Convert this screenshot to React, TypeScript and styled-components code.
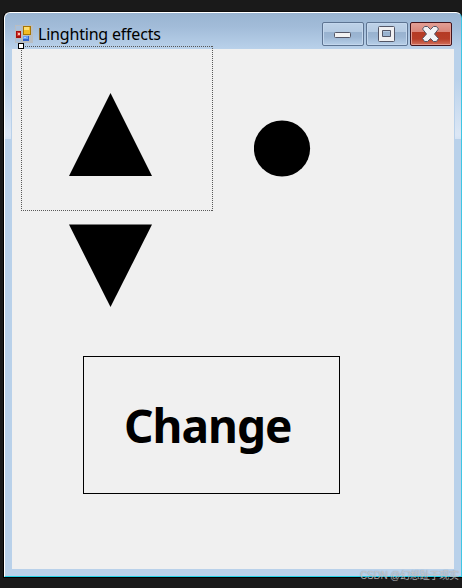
import React from "react";
import styled, { createGlobalStyle } from "styled-components";

const GlobalStyle = createGlobalStyle`
  * { box-sizing: border-box; }
  html, body { margin: 0; padding: 0; background: #1a1a1a; overflow: hidden; }
`;

const Desktop = styled.div`
  position: relative;
  width: 462px;
  height: 588px;
  padding: 11px 0 0 3px;
  background: #1a1a1a;
  overflow: hidden;
`;

const WindowFrame = styled.div`
  display: flex;
  flex-direction: column;
  width: 459px;
  height: 567px;
  border: 1px solid #000;
  border-right: 0;
  border-top-color: #10100f;
  border-radius: 7px 7px 0 0;
  background: #000;
`;

const WindowGlass = styled.div`
  display: flex;
  flex-direction: column;
  flex: 1;
  border: 1px solid #fff;
  border-right-color: #3fc6e4;
  border-bottom-color: #25d0e6;
  border-radius: 6px 6px 0 0;
  padding: 0 7px 7px;
  background:
    linear-gradient(#b9d1ea, #b9d1ea) 0 126px / 100% 100% no-repeat,
    linear-gradient(#99b4d1 0, #a2bcd9 14px, #b9d1ea 36px, #b9d1ea 66px, #dce7f5 122px, #d6e3f3 126px);
`;

const TitleBar = styled.header`
  display: flex;
  align-items: flex-start;
  height: 36px;
  flex: none;
  margin: 0 -4px;
  padding: 9px 6px 0 7px;
`;

const AppIcon = styled.svg`
  width: 18px;
  height: 18px;
  margin-top: 3px;
  flex: none;
`;

const Title = styled.span`
  margin: 1px auto 0 5px;
  font: 16px/22px "Noto Sans", "Open Sans", sans-serif;
  letter-spacing: -0.2px;
  color: #000;
  white-space: nowrap;
`;

const Controls = styled.div`
  display: flex;
  gap: 2px;
`;

const ControlButton = styled.button<{ $danger?: boolean }>`
  display: flex;
  align-items: center;
  justify-content: center;
  width: 42px;
  height: 24px;
  padding: 0;
  border: 1px solid ${(p) => (p.$danger ? "#43141c" : "#5d7492")};
  border-radius: 2px;
  box-shadow: inset 0 0 0 1px ${(p) => (p.$danger ? "#e39b8f" : "#c3d7ed")};
  background: ${(p) =>
    p.$danger
      ? "linear-gradient(#e3a097 0, #d98578 9px, #b53a24 9px, #b73e28 16px, #d2705c 100%)"
      : "linear-gradient(#bed2e8 0, #b4cae2 9px, #98b2cf 9px, #9cb6d3 14px, #b7cfe8 100%)"};
`;

const Glyph = styled.svg`
  display: block;
  flex: none;
`;

const Form = styled.main`
  display: grid;
  grid-template-columns: 192px 1fr;
  grid-template-rows: 162px 145px 138px 1fr;
  flex: 1;
  min-height: 0;
  padding-left: 9px;
  background: #f0f0f0;
  box-shadow: 0 0 0 1px #b9d1ea;
`;

const SelectedLabel = styled.div`
  position: relative;
  width: 192px;
  height: 165px;
  margin-top: -3px;
  padding: 47px 0 0 48px;
  background:
    repeating-linear-gradient(90deg, #585858 0 1px, transparent 1px 2px) top / 100% 1px no-repeat,
    repeating-linear-gradient(90deg, #585858 0 1px, transparent 1px 2px) bottom / 100% 1px no-repeat,
    repeating-linear-gradient(#585858 0 1px, transparent 1px 2px) left / 1px 100% no-repeat,
    repeating-linear-gradient(#585858 0 1px, transparent 1px 2px) right / 1px 100% no-repeat;
`;

const Handle = styled.i`
  position: absolute;
  left: -3px;
  top: -3px;
  width: 6px;
  height: 6px;
  border: 1px solid #000;
  background: #fff;
`;

const CircleCell = styled.div`
  padding: 71px 0 0 41px;
`;

const DownCell = styled.div`
  grid-column: 1 / -1;
  padding: 13px 0 0 48px;
`;

const ChangeButton = styled.button`
  grid-column: 1 / -1;
  width: 257px;
  height: 138px;
  margin-left: 62px;
  padding: 0 0 0 40px;
  border: 1px solid #000;
  background: transparent;
  color: #000;
  font: bold 46px/60px "Noto Sans", "Open Sans", sans-serif;
  letter-spacing: -1px;
  text-align: left;
`;

const Watermark = styled.span`
  position: absolute;
  left: 360px;
  top: 568px;
  font: 10px/16px "Liberation Sans", "Noto Sans CJK SC", sans-serif;
  letter-spacing: -0.2px;
  color: rgba(222, 222, 222, 0.7);
  text-shadow: 0 0 1px rgba(80, 90, 100, 0.6);
  white-space: nowrap;
`;

export default function App() {
  return (
    <Desktop>
      <GlobalStyle />
      <WindowFrame>
        <WindowGlass>
          <TitleBar>
            <AppIcon viewBox="0 0 18 18" shapeRendering="crispEdges">
              <path d="M0 0h18v18H0z" fill="#b9bdc1" />
              <path d="M1 1h5v4H1zM1 14h5v3H1z" fill="#a9c0db" />
              <path d="M1 6h5v7H1z" fill="#a80f0c" />
              <path d="M2 7h3v4H2z" fill="#d53a31" />
              <path d="M3 8h2v2H3z" fill="#ffc0b0" />
              <path d="M8 1h8v9H8z" fill="#a87500" />
              <path d="M9 2h6v7H9z" fill="#f3bb24" />
              <path d="M9 2h5v3H9z" fill="#ffdf70" />
              <path d="M8 11h6v5H8z" fill="#3264cb" />
              <path d="M8 11h5v3H8z" fill="#69a0f4" />
              <path d="M9 12h2v1H9z" fill="#a8ccff" />
            </AppIcon>
            <Title>Linghting effects</Title>
            <Controls>
              <ControlButton aria-label="Minimize">
                <Glyph width="18" height="16" viewBox="0 0 18 16">
                  <rect x=".5" y="6.500" width="16" height="5" rx="1" fill="#f3f3f3" stroke="#535666" />
                </Glyph>
              </ControlButton>
              <ControlButton aria-label="Maximize">
                <Glyph width="18" height="16" viewBox="0 0 18 16">
                  <path
                    d="M.5 1.500q0-1 1-1h14q1 0 1 1v13q0 1-1 1h-14q-1 0-1-1zM4.500 4.500v6h8v-6z"
                    fill="#f0f0f2"
                    fillRule="evenodd"
                    stroke="#535666"
                  />
                </Glyph>
              </ControlButton>
              <ControlButton $danger aria-label="Close">
                <Glyph width="18" height="16" viewBox="0 0 18 16">
                  <path
                    d="M2.500.5h3L8.500 3.500 11.500.5h3l2 2.500L12.500 8l4 4.500-2 3h-3L8.500 12.500l-3 3h-3l-2-3L4.500 8 .500 3z"
                    fill="#f2f2f4"
                    stroke="#535666"
                    strokeLinejoin="round"
                  />
                </Glyph>
              </ControlButton>
            </Controls>
          </TitleBar>
          <Form>
            <SelectedLabel>
              <Handle />
              <Glyph width="83" height="83" viewBox="0 0 83 83">
                <path d="M41.500 0 83 83H0z" />
              </Glyph>
            </SelectedLabel>
            <CircleCell>
              <Glyph width="57" height="58" viewBox="0 0 57 58">
                <circle cx="28" cy="28.500" r="28.100" />
              </Glyph>
            </CircleCell>
            <DownCell>
              <Glyph width="83" height="83" viewBox="0 0 83 83">
                <path d="M0 .600h83L41.500 83z" />
              </Glyph>
            </DownCell>
            <ChangeButton>Change</ChangeButton>
          </Form>
        </WindowGlass>
      </WindowFrame>
      <Watermark>CSDN @幻想趾于现实</Watermark>
    </Desktop>
  );
}
